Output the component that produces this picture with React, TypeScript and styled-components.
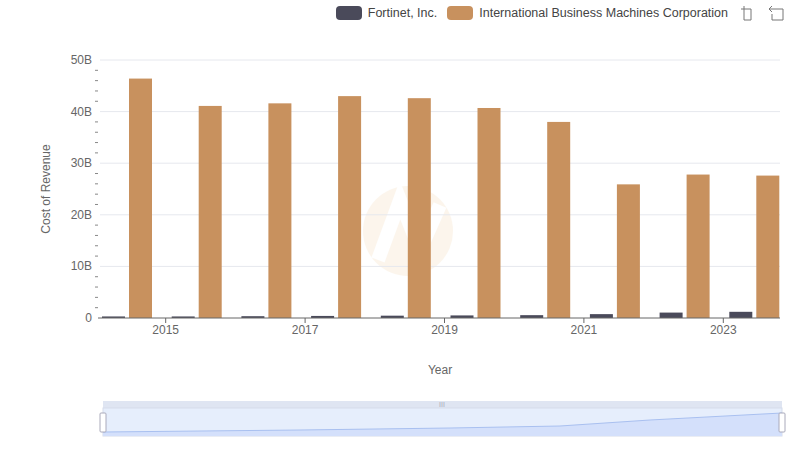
import React from "react";
import styled, { createGlobalStyle } from "styled-components";

const Global = createGlobalStyle`
  html, body { margin: 0; padding: 0; background: #fff; }
  body { font-family: "Liberation Sans", Arial, sans-serif; }
`;

const Page = styled.div`
  width: 800px;
  height: 461px;
  position: relative;
  display: flex;
  flex-direction: column;
`;

const LegendBar = styled.div`
  height: 26px;
  display: flex;
  align-items: center;
  justify-content: flex-end;
  padding-right: 16px;
  gap: 10px;
  font-size: 12.5px;
  color: #444;
`;

const LegendItem = styled.div`
  display: flex;
  align-items: center;
  gap: 6px;
`;

const Swatch = styled.span<{ $c: string }>`
  width: 26px;
  height: 14px;
  border-radius: 4px;
  background: ${(p) => p.$c};
`;

const Tools = styled.div`
  display: flex;
  gap: 12px;
  margin-left: 2px;
`;

const ChartSvg = styled.svg`
  display: block;
`;

const fortinet = [0.3, 0.3, 0.35, 0.4, 0.45, 0.5, 0.55, 0.75, 1.05, 1.2];
const ibm = [46.4, 41.1, 41.6, 43.0, 42.6, 40.7, 38.0, 25.9, 27.8, 27.6];

const x0 = 100;
const gw = 69.7;
const y0 = 318;
const per = 51.6;

export default function App() {
  const minor = [];
  for (let v = 0; v <= 50; v += 2) minor.push(v);
  return (
    <Page>
      <Global />
      <LegendBar>
        <LegendItem>
          <Swatch $c="#4a4a5a" />
          Fortinet, Inc.
        </LegendItem>
        <LegendItem>
          <Swatch $c="#c8915e" />
          International Business Machines Corporation
        </LegendItem>
        <Tools>
          <svg width="16" height="16" viewBox="0 0 16 16" fill="none" stroke="#777" strokeWidth="1">
            <path d="M1 4h10M4 1v10M4 11h0M11 4v11M4 15h7M4 11v4" />
          </svg>
          <svg width="16" height="16" viewBox="0 0 16 16" fill="none" stroke="#777" strokeWidth="1">
            <path d="M4 4h11v11H4V9M1 4l3-3M1 4l3 3M1 4h3" />
          </svg>
        </Tools>
      </LegendBar>
      <ChartSvg width="800" height="435" viewBox="0 26 800 435">
        <g opacity="0.12">
          <circle cx="408" cy="231" r="45" fill="#e8b36a" />
          <path d="M378 260 L400 200 L420 250 L440 205" stroke="#fff" strokeWidth="14" fill="none" />
        </g>
        {[0, 10, 20, 30, 40, 50].map((v) => (
          <g key={v}>
            {v > 0 && <line x1={x0} x2={780} y1={y0 - v * per / 10} y2={y0 - v * per / 10} stroke="#e6e8ee" />}
            <text x={92} y={y0 - v * per / 10 + 4} fontSize="12" fill="#666" textAnchor="end">
              {v === 0 ? "0" : `${v}B`}
            </text>
          </g>
        ))}
        {minor.filter((v) => v % 10 !== 0).map((v) => (
          <line key={v} x1={95} x2={98} y1={y0 - v * per / 10} y2={y0 - v * per / 10} stroke="#888" />
        ))}
        <text x={50} y={189} fontSize="12" fill="#666" textAnchor="middle" transform="rotate(-90 50 189)">
          Cost of Revenue
        </text>
        {ibm.map((v, i) => {
          const gx = x0 + i * gw;
          const fh = fortinet[i] * per / 10;
          const ih = v * per / 10;
          return (
            <g key={i}>
              <rect x={gx + 2} y={y0 - fh} width={23} height={fh} fill="#4a4a5a" />
              <rect x={gx + 29} y={y0 - ih} width={23} height={ih} fill="#c8915e" />
            </g>
          );
        })}
        <line x1={x0 - 2} x2={780} y1={y0} y2={y0} stroke="#666" />
        {[1, 3, 5, 7, 9].map((i) => {
          const tx = x0 + i * gw - 4;
          return (
            <g key={i}>
              <line x1={tx} x2={tx} y1={y0} y2={y0 + 5} stroke="#666" />
              <text x={tx} y={y0 + 16} fontSize="12" fill="#666" textAnchor="middle">{2014 + i}</text>
            </g>
          );
        })}
        <text x={440} y={374} fontSize="12" fill="#666" textAnchor="middle">Year</text>
        <rect x={103} y={401} width={679} height={7} fill="#dfe5f2" />
        <rect x={103} y={408} width={679} height={28} fill="#e6eefc" stroke="#d5dcea" />
        <path d="M103 432 L300 430 L450 428 L560 426 L650 420 L782 413 L782 436 L103 436 Z" fill="#d4e0fb" />
        <path d="M103 432 L300 430 L450 428 L560 426 L650 420 L782 413" stroke="#a9c0f0" fill="none" />
        <text x={442} y={407} fontSize="7" fill="#aab" textAnchor="middle">III</text>
        <rect x={100} y={413} width={6} height={19} rx={1} fill="#fff" stroke="#aab" />
        <rect x={779} y={413} width={6} height={19} rx={1} fill="#fff" stroke="#aab" />
      </ChartSvg>
    </Page>
  );
}
